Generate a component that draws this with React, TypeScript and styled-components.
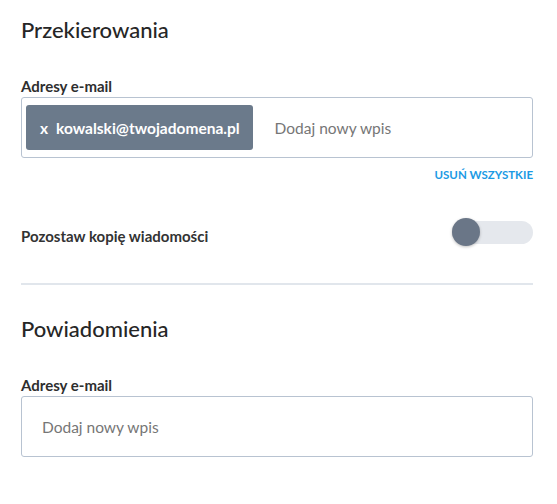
import React from "react";
import styled, { createGlobalStyle } from "styled-components";

const Global = createGlobalStyle`
  html, body { margin: 0; padding: 0; background: #fff; }
  body { font-family: Lato, "Noto Sans", sans-serif; color: #2b2b2b; }
  * { box-sizing: border-box; }
`;

const Page = styled.div`
  width: 557px;
  padding: 16px 24px 0 21px;
`;

const Section = styled.section`
  display: flex;
  flex-direction: column;
`;

const Heading = styled.h2`
  margin: 0;
  font-size: 22px;
  font-weight: 500;
  line-height: 28px;
  color: #262626;
`;

const Label = styled.div`
  margin-top: 32px;
  font-size: 15px;
  font-weight: 700;
  line-height: 20px;
  color: #2e2e2e;
`;

const InputBox = styled.div`
  margin-top: 1px;
  height: 61px;
  border: 1px solid #b8c3d1;
  border-radius: 3px;
  display: flex;
  align-items: center;
  padding: 0 8px 0 4px;
  gap: 22px;
`;

const Chip = styled.div`
  height: 45px;
  background: #6b7a8b;
  border-radius: 3px;
  color: #fff;
  display: flex;
  align-items: center;
  padding: 0 13px 0 14px;
  font-size: 15.5px;
  font-weight: 700;
  gap: 8px;
`;

const ChipX = styled.span`
  font-size: 15.5px;
  font-weight: 700;
`;

const Placeholder = styled.span<{ $inset?: boolean }>`
  font-size: 15.5px;
  color: #767676;
  padding-left: ${(p) => (p.$inset ? "16px" : "0")};
`;

const ClearRow = styled.div`
  display: flex;
  justify-content: flex-end;
  margin-top: 10px;
`;

const ClearLink = styled.a`
  font-size: 11.5px;
  font-weight: 700;
  color: #1b9ae4;
  text-transform: uppercase;
  cursor: pointer;
`;

const ToggleRow = styled.div`
  margin-top: 38px;
  display: flex;
  align-items: center;
  justify-content: space-between;
`;

const ToggleLabel = styled.span`
  font-size: 15px;
  font-weight: 700;
  color: #333;
  padding-top: 8px;
`;

const Track = styled.div`
  width: 81px;
  height: 23px;
  border-radius: 12px;
  background: #e5e8ed;
  position: relative;
`;

const Knob = styled.div`
  position: absolute;
  left: 0;
  top: -2.5px;
  width: 28px;
  height: 28px;
  border-radius: 50%;
  background: #6a7687;
  box-shadow: 0 1px 3px rgba(0, 0, 0, 0.25);
`;

const Divider = styled.hr`
  margin: 38px 0 30px;
  border: 0;
  border-top: 2px solid #e1e6ec;
`;

export default function App() {
  return (
    <>
      <Global />
      <Page>
        <Section>
          <Heading>Przekierowania</Heading>
          <Label>Adresy e-mail</Label>
          <InputBox>
            <Chip>
              <ChipX>x</ChipX>
              kowalski@twojadomena.pl
            </Chip>
            <Placeholder>Dodaj nowy wpis</Placeholder>
          </InputBox>
          <ClearRow>
            <ClearLink>Usuń wszystkie</ClearLink>
          </ClearRow>
          <ToggleRow>
            <ToggleLabel>Pozostaw kopię wiadomości</ToggleLabel>
            <Track>
              <Knob />
            </Track>
          </ToggleRow>
        </Section>
        <Divider />
        <Section>
          <Heading>Powiadomienia</Heading>
          <Label>Adresy e-mail</Label>
          <InputBox>
            <Placeholder $inset>Dodaj nowy wpis</Placeholder>
          </InputBox>
        </Section>
      </Page>
    </>
  );
}
